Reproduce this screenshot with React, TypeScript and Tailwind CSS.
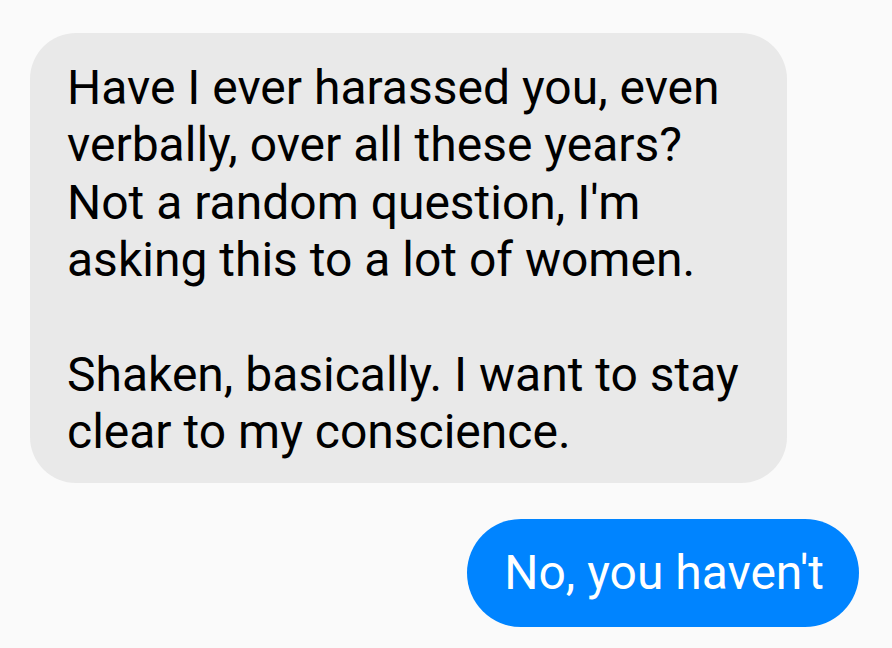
import React from "react";

export default function App() {
  const font = { fontFamily: "Roboto, 'Noto Sans', sans-serif" };
  return (
    <div className="w-[892px] h-[648px] bg-[#fafafa] overflow-hidden" style={font}>
      <div className="flex flex-col pt-[33px] px-[30px]">
        <div className="self-start w-[757px] h-[450px] bg-[#e9e9e9] rounded-[46px] pl-[37px] pt-[26px] text-[48px] leading-[57.4px] text-black">
          <div>Have I ever harassed you, even</div>
          <div>verbally, over all these years?</div>
          <div>Not a random question, I'm</div>
          <div>asking this to a lot of women.</div>
          <div>&nbsp;</div>
          <div>Shaken, basically. I want to stay</div>
          <div>clear to my conscience.</div>
        </div>
        <div className="self-end mt-[36px] mr-[3px] h-[108px] rounded-full bg-[#0084ff] flex items-center pl-[37px] pr-[35px] text-[48px] text-white whitespace-nowrap">
          No, you haven't
        </div>
      </div>
    </div>
  );
}
